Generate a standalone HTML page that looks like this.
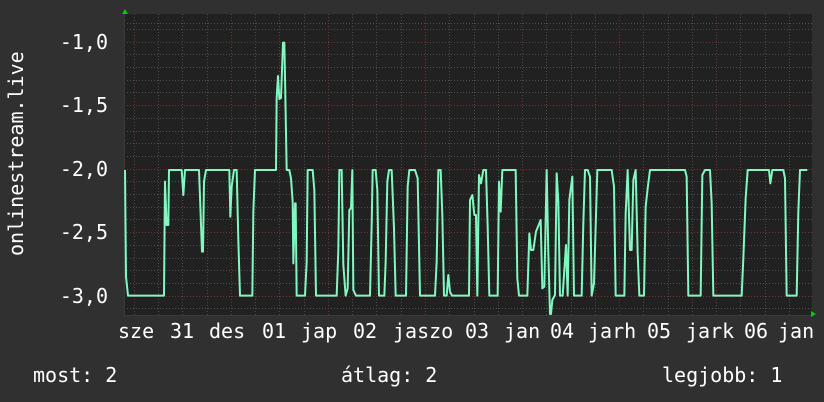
<!DOCTYPE html>
<html><head><meta charset="utf-8"><style>
html,body{margin:0;padding:0;background:#303030;}
body{width:824px;height:402px;position:relative;overflow:hidden;font-family:"DejaVu Sans Mono","Liberation Mono",monospace;color:#fff;}
.t{position:absolute;font-size:20px;line-height:20px;white-space:pre;}
.yl{position:absolute;right:716px;font-size:20px;line-height:20px;}
</style></head><body>
<svg width="824" height="402" style="position:absolute;left:0;top:0">
<rect x="124" y="14" width="688" height="301" fill="#212121"/>
<g stroke="#4e4e4e" stroke-width="1" stroke-dasharray="1,2">
<line x1="124" x2="812" y1="23.5" y2="23.5"/><line x1="124" x2="812" y1="29.5" y2="29.5"/>
<line x1="124" x2="812" y1="54.5" y2="54.5"/><line x1="124" x2="812" y1="67.5" y2="67.5"/><line x1="124" x2="812" y1="80.5" y2="80.5"/><line x1="124" x2="812" y1="92.5" y2="92.5"/>
<line x1="124" x2="812" y1="118.5" y2="118.5"/><line x1="124" x2="812" y1="131.5" y2="131.5"/><line x1="124" x2="812" y1="143.5" y2="143.5"/><line x1="124" x2="812" y1="156.5" y2="156.5"/>
<line x1="124" x2="812" y1="181.5" y2="181.5"/><line x1="124" x2="812" y1="194.5" y2="194.5"/><line x1="124" x2="812" y1="207.5" y2="207.5"/><line x1="124" x2="812" y1="219.5" y2="219.5"/>
<line x1="124" x2="812" y1="245.5" y2="245.5"/><line x1="124" x2="812" y1="258.5" y2="258.5"/><line x1="124" x2="812" y1="270.5" y2="270.5"/><line x1="124" x2="812" y1="283.5" y2="283.5"/>
<line x1="124" x2="812" y1="308.5" y2="308.5"/>
<line y1="14" y2="315" x1="158.5" x2="158.5"/><line y1="14" y2="315" x1="182.5" x2="182.5"/><line y1="14" y2="315" x1="207.5" x2="207.5"/>
<line y1="14" y2="315" x1="255.5" x2="255.5"/><line y1="14" y2="315" x1="279.5" x2="279.5"/><line y1="14" y2="315" x1="304.5" x2="304.5"/>
<line y1="14" y2="315" x1="352.5" x2="352.5"/><line y1="14" y2="315" x1="376.5" x2="376.5"/><line y1="14" y2="315" x1="401.5" x2="401.5"/>
<line y1="14" y2="315" x1="449.5" x2="449.5"/><line y1="14" y2="315" x1="474.5" x2="474.5"/><line y1="14" y2="315" x1="498.5" x2="498.5"/>
<line y1="14" y2="315" x1="546.5" x2="546.5"/><line y1="14" y2="315" x1="571.5" x2="571.5"/><line y1="14" y2="315" x1="595.5" x2="595.5"/>
<line y1="14" y2="315" x1="643.5" x2="643.5"/><line y1="14" y2="315" x1="668.5" x2="668.5"/><line y1="14" y2="315" x1="692.5" x2="692.5"/>
<line y1="14" y2="315" x1="740.5" x2="740.5"/><line y1="14" y2="315" x1="765.5" x2="765.5"/><line y1="14" y2="315" x1="789.5" x2="789.5"/>
</g>
<g stroke="#7a3333" stroke-width="1" stroke-dasharray="1,2">
<line x1="124" x2="812" y1="42.5" y2="42.5"/><line x1="124" x2="812" y1="105.5" y2="105.5"/><line x1="124" x2="812" y1="169.5" y2="169.5"/><line x1="124" x2="812" y1="232.5" y2="232.5"/><line x1="124" x2="812" y1="296.5" y2="296.5"/>
<line y1="14" y2="315" x1="134.5" x2="134.5"/><line y1="14" y2="315" x1="231.5" x2="231.5"/><line y1="14" y2="315" x1="328.5" x2="328.5"/><line y1="14" y2="315" x1="425.5" x2="425.5"/><line y1="14" y2="315" x1="522.5" x2="522.5"/><line y1="14" y2="315" x1="619.5" x2="619.5"/><line y1="14" y2="315" x1="716.5" x2="716.5"/>
</g>
<line x1="124" x2="812" y1="315.5" y2="315.5" stroke="#3a3a3a"/>
<line x1="124.5" x2="124.5" y1="14" y2="318" stroke="#3a3a3a"/>
<polygon points="122,14 125,9 128,14" fill="#00d000"/>
<polygon points="811,311 816,314 811,317" fill="#00d000"/>
<g fill="none" stroke="#80f8c0" stroke-width="6" stroke-linejoin="round">
<polyline transform="translate(120,160) scale(0.33333)" points="15,30 18,350 24,407 132,407 135,65 140,195 145,195 147,30 185,30 190,105 195,30 237,30 242,165 246,275 249,275 252,65 258,30 328,30 331,170 335,80 342,30 350,30 355,240 360,407 397,407 400,155 405,30 468,30 470,-186 474,-252 478,-183 483,-186 489,-352 493,-352 495,-249 500,30 508,30 513,55 518,125 520,310 525,130 527,130 530,407 555,407 560,305 563,30 578,30 583,90 588,407 650,407 655,270 658,30 665,30 670,315 677,407 683,385 688,150 693,145 697,30 700,390 708,407 750,407 755,195 758,30 767,30 772,90 777,407 793,407 797,305 802,65 807,30 815,30 822,205 827,407 858,407 863,80 868,30 885,30 893,55 900,407 945,407 950,305 955,30 962,30 967,165 972,407 980,407 985,345 990,395 996,407 1035,407"/>
<polyline transform="translate(465,160) scale(0.33333)" points="0,407 12,407 15,120 22,105 28,165 33,165 37,407 42,45 48,70 55,30 63,30 68,200 73,407 98,407 102,65 107,155 112,30 152,30 157,355 162,407 187,407 193,220 198,270 205,270 213,215 227,180 232,385 238,380 245,30 250,280 255,462 258,462 262,420 270,405 275,40 280,125 285,407 293,407 298,330 303,255 308,407 313,120 322,50 327,407 350,407 355,190 360,30 368,30 375,50 380,407 387,370 397,30 440,30 447,80 452,407 478,407 482,160 488,30 495,270 500,270 505,60 512,30 518,280 523,407 537,407 542,140 548,85 555,30 660,30 665,50 670,407 707,407 712,45 720,30 735,30 740,130 745,407 830,407 835,295 842,115 848,30 912,30 916,70 922,30 955,30 960,55 965,407 995,407 1000,155 1005,30 1027,30"/>
</g>
</svg>
<div class="yl" style="top:32px">-1,0</div>
<div class="yl" style="top:95px">-1,5</div>
<div class="yl" style="top:159px">-2,0</div>
<div class="yl" style="top:222px">-2,5</div>
<div class="yl" style="top:286px">-3,0</div>
<div class="t" style="left:-74px;top:156px;width:180px;text-align:center;transform:rotate(-90deg);">onlinestream.live</div>
<div class="t" style="left:118px;top:321px">sze</div>
<div class="t" style="left:170px;top:321px">31</div>
<div class="t" style="left:209px;top:321px">des</div>
<div class="t" style="left:262px;top:321px">01</div>
<div class="t" style="left:301px;top:321px">jap</div>
<div class="t" style="left:353px;top:321px">02</div>
<div class="t" style="left:393px;top:321px">jaszo</div>
<div class="t" style="left:465px;top:321px">03</div>
<div class="t" style="left:504px;top:321px">jan</div>
<div class="t" style="left:550px;top:321px">04</div>
<div class="t" style="left:588px;top:321px">jarh</div>
<div class="t" style="left:647px;top:321px">05</div>
<div class="t" style="left:686px;top:321px">jark</div>
<div class="t" style="left:744px;top:321px">06</div>
<div class="t" style="left:778px;top:321px">jan</div>
<div class="t" style="left:33px;top:365px">most: 2</div>
<div class="t" style="left:341px;top:365px">átlag: 2</div>
<div class="t" style="left:662px;top:365px">legjobb: 1</div>
</body></html>
